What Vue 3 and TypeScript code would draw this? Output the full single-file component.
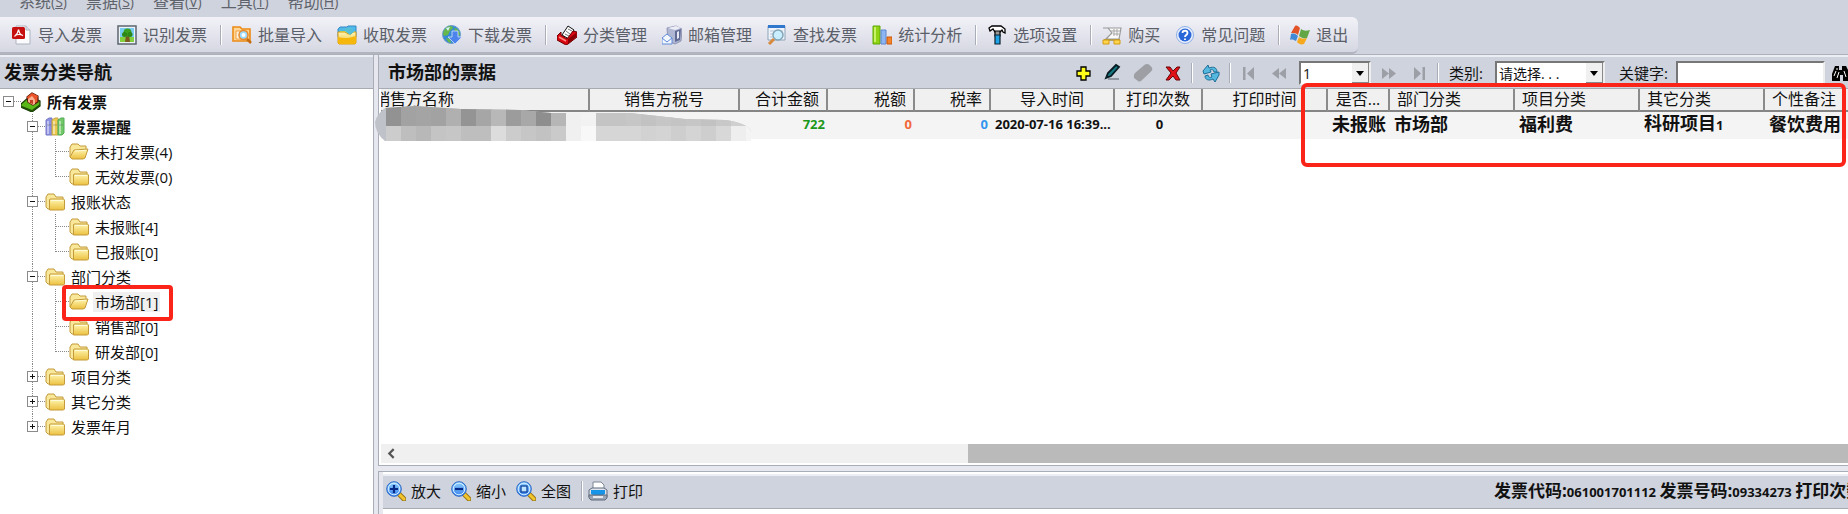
<script setup lang="ts">
import { ref } from 'vue'

interface MenuEntry { label: string; key: string }
interface Tool { icon: string; label: string; sep?: boolean }
interface TreeRow {
  label: string
  level: 0 | 1 | 2
  icon: string
  toggle?: 'open' | 'closed'
  bold?: boolean
  selected?: boolean
  marked?: boolean
  last?: boolean
}
interface Column { key: string; label: string; align: 'left' | 'center' | 'right' }

const menus: MenuEntry[] = [
  { label: '系统', key: 'S' },
  { label: '票据', key: 'S' },
  { label: '查看', key: 'V' },
  { label: '工具', key: 'T' },
  { label: '帮助', key: 'H' },
]

const tools: Tool[] = [
  { icon: 'pdf', label: '导入发票' },
  { icon: 'photo', label: '识别发票', sep: true },
  { icon: 'batch', label: '批量导入' },
  { icon: 'receive', label: '收取发票' },
  { icon: 'download', label: '下载发票', sep: true },
  { icon: 'classify', label: '分类管理' },
  { icon: 'mail', label: '邮箱管理' },
  { icon: 'search', label: '查找发票' },
  { icon: 'chart', label: '统计分析', sep: true },
  { icon: 'hammer', label: '选项设置', sep: true },
  { icon: 'cart', label: '购买' },
  { icon: 'help', label: '常见问题', sep: true },
  { icon: 'exit', label: '退出' },
]

const tree: TreeRow[] = [
  { label: '所有发票', level: 0, icon: 'house', toggle: 'open', bold: true },
  { label: '发票提醒', level: 1, icon: 'books', toggle: 'open', bold: true },
  { label: '未打发票(4)', level: 2, icon: 'folder-open' },
  { label: '无效发票(0)', level: 2, icon: 'folder', last: true },
  { label: '报账状态', level: 1, icon: 'folder', toggle: 'open' },
  { label: '未报账[4]', level: 2, icon: 'folder' },
  { label: '已报账[0]', level: 2, icon: 'folder', last: true },
  { label: '部门分类', level: 1, icon: 'folder', toggle: 'open' },
  { label: '市场部[1]', level: 2, icon: 'folder-open', selected: true, marked: true },
  { label: '销售部[0]', level: 2, icon: 'folder' },
  { label: '研发部[0]', level: 2, icon: 'folder', last: true },
  { label: '项目分类', level: 1, icon: 'folder', toggle: 'closed' },
  { label: '其它分类', level: 1, icon: 'folder', toggle: 'closed' },
  { label: '发票年月', level: 1, icon: 'folder', toggle: 'closed', last: true },
]

const columns: Column[] = [
  { key: 'seller', label: '销售方名称', align: 'left' },
  { key: 'taxno', label: '销售方税号', align: 'center' },
  { key: 'total', label: '合计金额', align: 'right' },
  { key: 'tax', label: '税额', align: 'right' },
  { key: 'rate', label: '税率', align: 'right' },
  { key: 'time', label: '导入时间', align: 'center' },
  { key: 'prints', label: '打印次数', align: 'center' },
  { key: 'printed', label: '打印时间', align: 'center' },
  { key: 'status', label: '是否...', align: 'center' },
  { key: 'dept', label: '部门分类', align: 'left' },
  { key: 'project', label: '项目分类', align: 'left' },
  { key: 'other', label: '其它分类', align: 'left' },
  { key: 'note', label: '个性备注', align: 'left' },
]

const maskTop = ['92', 'a2', 'a4', 'a2', 'b0', '94', 'a6', 'b8', '9c', 'a8', '8e', 'b6', 'f0', 'f2', 'c4', 'c4', 'c6', 'c2', 'c6', 'c4', 'c6', 'c2', 'c8', 'd0', 'f0']
const maskBottom = ['cc', 'be', 'b8', 'c4', 'c6', 'be', 'be', 'dc', 'cc', 'c6', 'c2', 'ca', 'f0', 'f8', 'd6', 'd6', 'd6', 'd2', 'd4', 'ce', 'd4', 'ce', 'd8', 'ee', 'f4']
const grey = (v: string): string => `#${v}${v}${v}`

const page = ref('1')
const keyword = ref('')
</script>

<template>
  <div class="app">
    <svg class="defs" aria-hidden="true">
      <linearGradient id="gold" x1="0" y1="0" x2="0" y2="1">
        <stop offset="0" stop-color="#fff6b0" /><stop offset="1" stop-color="#ecc040" />
      </linearGradient>
      <linearGradient id="azure" x1="0" y1="0" x2="0" y2="1">
        <stop offset="0" stop-color="#8fd0ff" /><stop offset="1" stop-color="#3b83ee" />
      </linearGradient>
      <symbol id="pdf" viewBox="0 0 20 20">
        <path d="M4 1h10l4 4v14H4z" fill="#fbfbfd" stroke="#aeb3bf" /><path d="M14 1v4h4" fill="#dfe3ea" stroke="#aeb3bf" />
        <rect x="0" y="2" width="13" height="12" rx="1.500" fill="#c80f10" />
        <path d="M6.500 4.500c1 4 1.500 5 4.500 6M6.500 4.500c-.5 4-1.500 5-4 7M3 10.500c3-1.500 5-1.500 8 0" fill="none" stroke="#fff" stroke-width="1.200" />
      </symbol>
      <symbol id="photo" viewBox="0 0 20 20">
        <path d="M1 1h18v18H1z" fill="#eef3f8" stroke="#5c6670" stroke-width="1.500" /><path d="M3 3h14v9H3z" fill="#79cdf5" /><path d="M3 12h14v5H3z" fill="#84cf3d" />
        <path d="M9 10h3l1 7H8z" fill="#7a5a20" /><circle cx="10.500" cy="7.500" r="4" fill="#3b9f20" /><circle cx="7.500" cy="9.500" r="2.500" fill="#2d8817" /><circle cx="13" cy="9.500" r="2.500" fill="#2d8817" />
      </symbol>
      <symbol id="batch" viewBox="0 0 20 20">
        <path d="M1 2h7l2 2h8v12H1z" fill="#ffd695" stroke="#ec8b14" stroke-width="1.600" /><path d="M4 6h11v8H4z" fill="#fff1d8" stroke="#f2a040" />
        <circle cx="11.500" cy="10" r="4.500" fill="#9adaff" stroke="#e6892c" stroke-width="1.500" /><circle cx="11.500" cy="10" r="2" fill="#fff" /><path d="M15 14l4 4" stroke="#c56b10" stroke-width="2.500" />
      </symbol>
      <symbol id="receive" viewBox="0 0 20 20">
        <path d="M1 4l2-2h7l1-1h8v11H1z" fill="#4fb9ea" stroke="#3489c1" /><path d="M3 6h15v5H3z" fill="#b9eb77" />
        <path d="M1 7h7l3 2h3l2-2h3v11l-1 1H2l-1-1z" fill="url(#gold)" stroke="#d99b11" /><path d="M1 12c6 2 12 1 18-1v7l-1 1H2l-1-1z" fill="#f5b70c" /><path d="M8 3h7v3l3 0-5 4-5-4z" fill="#56bfd6" />
      </symbol>
      <symbol id="download" viewBox="0 0 20 20">
        <circle cx="9.500" cy="9.500" r="9" fill="#3489d8" stroke="#6b9bc8" /><path d="M4 3c3-3 7-2 7 0L8 6 6 10 2 11C0 8 2 5 4 3zM12 3c4 0 6 4 6 8l-4-3zM4 13l4 1 1 4c-2 0-4-2-5-5z" fill="#66b84a" /><path d="M4 3l4-1-2 4z" fill="#d9f0ff" />
        <path d="M10 6h6v6h4l-7 7-7-7h4z" fill="#4c83ed" stroke="#d5e3fb" stroke-width=".8" />
      </symbol>
      <symbol id="classify" viewBox="0 0 20 20">
        <path d="M5 10L11 1l6 4-5 9z" fill="#fff" stroke="#111" /><path d="M9 6l4 3M11 4l4 2M8 9l4 2" stroke="#777" />
        <path d="M0 11l4-4v3l6 4 6-8 4 1v5l-9 7-2 1-9-5z" fill="#db0710" stroke="#6c0002" /><path d="M11 14v5l8-7V8z" fill="#8b0003" /><path d="M2 12l7 4" stroke="#ff8a80" stroke-width="1.500" />
      </symbol>
      <symbol id="mail" viewBox="0 0 20 20">
        <path d="M5 3l9-2 6 3-1 12-6 3-7-3z" fill="#b0b7d2" stroke="#8f95b4" /><path d="M13 6l6-2-1 11-5 2z" fill="#626b96" /><path d="M15 7l2-1v7l-2 1z" fill="#e6e9f4" /><path d="M6 3l8-2 5 2-6 2z" fill="#ecedf6" />
        <path d="M0 13l5-4 5 4v6H0z" fill="#f3f8ff" stroke="#618bd8" /><path d="M0 13l5 4 5-4" fill="none" stroke="#618bd8" />
      </symbol>
      <symbol id="search" viewBox="0 0 20 20">
        <path d="M1 1h17v14H1z" fill="#eef4fa" stroke="#8fa3b8" /><path d="M1 0h17v3H1z" fill="#2f78cd" /><path d="M3 6h13M3 9h13M3 12h13" stroke="#b9c6d4" />
        <circle cx="11" cy="10" r="5" fill="#c7efff" fill-opacity=".9" stroke="#83a5b8" stroke-width="1.500" /><path d="M7 14l-5 5" stroke="#d88a3c" stroke-width="3" />
      </symbol>
      <symbol id="chart" viewBox="0 0 20 20">
        <path d="M1 1h7v18H1z" fill="#8ed314" stroke="#5fa707" /><path d="M9 5h5v14H9z" fill="#8db5f2" stroke="#5c86cf" /><path d="M15 12h5v7h-5z" fill="#f48329" stroke="#c9570b" /><path d="M3 2v15" stroke="#c8f368" stroke-width="2" />
      </symbol>
      <symbol id="hammer" viewBox="0 0 20 20">
        <path d="M2 3l3-2h9l4 3v4l-2-1-1-2-2 2H8L6 4 3 6z" fill="#fff" stroke="#000" stroke-width="1.300" /><path d="M8 6h5v5H8z" fill="#999" stroke="#000" stroke-width="1.200" /><path d="M8 10h5v9H8z" fill="#20a5e8" stroke="#0b2430" stroke-width="1.200" />
      </symbol>
      <symbol id="cart" viewBox="0 0 20 20">
        <path d="M1 3h5l4 5-6 6h13l2-11H6" fill="#fafafa" stroke="#9a9a9a" stroke-width="1.200" /><path d="M9 6h9M11 9h6M12 4v7M15 4v7" stroke="#a8a8a8" /><path d="M2 15h16" stroke="#a98f30" stroke-width="1.500" />
        <path d="M1 15h6v4H1zM12 15h6v4h-6z" fill="#ffd54c" stroke="#d39b12" />
      </symbol>
      <symbol id="help" viewBox="0 0 20 20">
        <circle cx="10" cy="10" r="8.500" fill="#eaf1fd" stroke="#8eaee5" /><circle cx="10" cy="10" r="6.500" fill="#2a67d8" /><path d="M7.500 8c0-3 5-3 5 0 0 2-2.500 2-2.500 4M10 13.500v1.500" fill="none" stroke="#fff" stroke-width="1.800" />
      </symbol>
      <symbol id="exit" viewBox="0 0 20 20">
        <path d="M5 1c2-1 3 0 5 2L8 10C6 8 4 8 1 8z" fill="#e25327" /><path d="M11 4c3 2 5 2 9 1l-3 8c-3 1-5 0-8-2z" fill="#62a646" /><path d="M1 9c3-1 5 0 7 2l-2 5c-2-1-4-2-6-1z" fill="#4289d5" /><path d="M9 12c2 2 5 2 8 1l-3 6c-3 1-5 0-7-2z" fill="#f6a91d" />
      </symbol>
      <symbol id="house" viewBox="0 0 20 20">
        <path d="M0 12l8-7 11 4v5l-8 6-11-5z" fill="#57b817" stroke="#173c05" stroke-width="1.200" /><path d="M1 14l10 4 8-6v2l-8 6-10-4z" fill="#204d08" />
        <path d="M6 5l5-4 6 3v6l-5 3-5-3z" fill="#e95d32" stroke="#551505" stroke-width="1.200" /><path d="M7 6l4-3 3 5v4l-2 1-5-3z" fill="#f8b090" /><path d="M9 8h3v4l-3-1z" fill="#c14021" />
        <path d="M6 5l5-4 6 3-2 4-4-4-4 3z" fill="#ed5329" />
      </symbol>
      <symbol id="books" viewBox="0 0 20 20">
        <path d="M1 3l3-2h3v17H1z" fill="#8d91e2" stroke="#7779c5" /><path d="M7 3l3-2h3v17H7z" fill="#ecc84e" stroke="#c5a448" /><path d="M13 3l3-2h3v15l-2 2h-4z" fill="#73c968" stroke="#50aa55" /><path d="M3 4v13M9 4v13M15 4v13" stroke="#fff" stroke-opacity=".6" stroke-width="1.500" /><path d="M2 8h4M8 8h4M14 8h4" stroke="#555" stroke-opacity=".4" />
      </symbol>
      <symbol id="folder" viewBox="0 0 20 20">
        <path d="M1 15V5l2-3h6l2 3h7v11l-1 1H3z" fill="#f9e79a" stroke="#c49a3a" /><path d="M5 7h13.500l1 1v9l-1 1H4.500V8z" fill="url(#gold)" stroke="#c49a3a" /><path d="M6 8.500h12" stroke="#fffbd8" />
      </symbol>
      <symbol id="folder-open" viewBox="0 0 20 20">
        <path d="M1 15V5l2-3h6l2 2h6v5" fill="#f9e79a" stroke="#c49a3a" /><path d="M5 8l14-1-3 9-2 1H3l-2-2z" fill="url(#gold)" stroke="#c49a3a" /><path d="M6 9l11-.7" stroke="#fffbd8" />
      </symbol>
      <symbol id="add" viewBox="0 0 20 20"><path d="M8 4h5v4h4v5h-4v4H8v-4H4V8h4z" fill="#ffff1a" stroke="#000" stroke-width="1.300" /></symbol>
      <symbol id="edit" viewBox="0 0 20 20"><path d="M3 15l2-5 8-8 3 2-8 9z" fill="#167984" stroke="#071b22" stroke-width="1.800" /><path d="M5 16h11" stroke="#7d838d" stroke-width="1.500" /></symbol>
      <symbol id="eraser" viewBox="0 0 20 20"><path d="M2 10L12 1.500q2-1 4 0l3 3q1 2-1 4L8 18q-2 1-3 0l-4-3q-1-3 1-5z" fill="#9d9fa4" /></symbol>
      <symbol id="remove" viewBox="0 0 20 20"><path d="M3 4h4l3 4 4-4h3l-4 6 4 7h-4l-3-4-4 4H3l5-7z" fill="#e01217" stroke="#6a0507" /></symbol>
      <symbol id="refresh" viewBox="0 0 20 20"><path d="M2 8l5-6 1 3c5-2 8 0 8 4l-3 0c0-2-2-3-4-2l1 2-7 2zM18 12l-4 7-2-3c-4 2-8 1-8-3l3-1c0 2 2 3 4 2l-1-3 8-2z" fill="#55b9df" stroke="#1d6d98" /></symbol>
      <symbol id="first" viewBox="0 0 20 20"><path d="M4 4h2.500v13H4zM15 4v13L8 10.500z" fill="#9c9fa6" /></symbol>
      <symbol id="prev" viewBox="0 0 20 20"><path d="M10 5v11l-7-5.500zM17 5v11l-7-5.500z" fill="#9c9fa6" /></symbol>
      <symbol id="next" viewBox="0 0 20 20"><path d="M3 5v11l7-5.500zM10 5v11l7-5.500z" fill="#9c9fa6" /></symbol>
      <symbol id="last" viewBox="0 0 20 20"><path d="M5 4v13l7-6.500zM13.500 4H16v13h-2.500z" fill="#9c9fa6" /></symbol>
      <symbol id="find" viewBox="0 0 20 20"><path d="M4 3h4v4h3V3h4l4 8v7h-7v-6h-3v6H1v-7z" fill="#000" /><path d="M5 8l-2 5M13 8l2 6M6 5v2M8 9l-2 6" stroke="#fff" stroke-width="1" /></symbol>
      <symbol id="zoom-in" viewBox="0 0 20 20"><path d="M13 13l5 5" stroke="#9c7412" stroke-width="5" stroke-linecap="round" /><path d="M13 13l5 5" stroke="#f1c52c" stroke-width="3" stroke-linecap="round" /><circle cx="8" cy="8" r="7.300" fill="url(#azure)" stroke="#2d68c6" /><circle cx="8" cy="8" r="5.800" fill="none" stroke="#d3efff" /><path d="M8 4v8M4 8h8" stroke="#062a88" stroke-width="2.200" /></symbol>
      <symbol id="zoom-out" viewBox="0 0 20 20"><path d="M13 13l5 5" stroke="#9c7412" stroke-width="5" stroke-linecap="round" /><path d="M13 13l5 5" stroke="#f1c52c" stroke-width="3" stroke-linecap="round" /><circle cx="8" cy="8" r="7.300" fill="url(#azure)" stroke="#2d68c6" /><circle cx="8" cy="8" r="5.800" fill="none" stroke="#d3efff" /><path d="M4 8h8" stroke="#062a88" stroke-width="2.200" /></symbol>
      <symbol id="zoom-fit" viewBox="0 0 20 20"><path d="M13 13l5 5" stroke="#9c7412" stroke-width="5" stroke-linecap="round" /><path d="M13 13l5 5" stroke="#f1c52c" stroke-width="3" stroke-linecap="round" /><circle cx="8" cy="8" r="7.300" fill="url(#azure)" stroke="#2d68c6" /><circle cx="8" cy="8" r="5.800" fill="none" stroke="#d3efff" /><rect x="5" y="5" width="6" height="6" fill="#bfe4ff" stroke="#0f429f" stroke-width="1.300" /></symbol>
      <symbol id="print" viewBox="0 0 20 20"><path d="M5 9V1h8l3 3v5z" fill="#fff" stroke="#7d8794" /><path d="M1 9l3-2h12l3 2v7H1z" fill="#dfe4ec" stroke="#5e6b7d" /><path d="M3 9h14v4l-2 1H5l-2-1z" fill="#1695e8" /><path d="M1 14h18v3l-2 2H3l-2-2z" fill="#9ba5b5" stroke="#5e6b7d" /><path d="M5 16h10" stroke="#fff" stroke-width="1.500" /></symbol>
    </svg>

    <nav class="menubar">
      <button v-for="m in menus" :key="m.label" type="button">{{ m.label }}<span class="hot">(<u>{{ m.key }}</u>)</span></button>
    </nav>

    <div class="toolbar" role="toolbar" aria-label="工具">
      <template v-for="t in tools" :key="t.label">
        <button type="button" class="tool"><svg class="icon"><use :href="'#' + t.icon" /></svg>{{ t.label }}</button>
        <i v-if="t.sep" class="sep"></i>
      </template>
    </div>

    <main class="main">
      <aside class="nav">
        <h2 class="bar title">发票分类导航</h2>
        <ul class="tree">
          <li v-for="row in tree" :key="row.label" class="row" :class="['lv' + row.level, { bold: row.bold, last: row.last }]">
            <i v-if="row.level === 2" class="trunk"></i>
            <button v-if="row.toggle" type="button" class="toggle" :class="row.toggle" :aria-label="row.label + ' 展开'"></button>
            <i class="twig"></i>
            <svg class="icon"><use :href="'#' + row.icon" /></svg>
            <span class="label" :class="{ selected: row.selected }">{{ row.label }}</span>
            <i v-if="row.marked" class="mark"></i>
          </li>
        </ul>
      </aside>

      <section class="content">
        <div class="list">
          <div class="bar listbar">
            <h2 class="title">市场部的票据</h2>
            <div class="actions">
              <button type="button" aria-label="新增"><svg class="icon"><use href="#add" /></svg></button>
              <button type="button" aria-label="编辑"><svg class="icon"><use href="#edit" /></svg></button>
              <button type="button" aria-label="清除"><svg class="icon"><use href="#eraser" /></svg></button>
              <button type="button" aria-label="删除"><svg class="icon"><use href="#remove" /></svg></button>
              <i class="sep"></i>
              <button type="button" aria-label="刷新"><svg class="icon"><use href="#refresh" /></svg></button>
              <i class="sep"></i>
              <button type="button" aria-label="首页"><svg class="icon"><use href="#first" /></svg></button>
              <button type="button" aria-label="上一页"><svg class="icon"><use href="#prev" /></svg></button>
              <span class="combo page">
                <select v-model="page" aria-label="页码"><option>1</option></select>
                <i class="arrow"></i>
              </span>
              <button type="button" aria-label="下一页"><svg class="icon"><use href="#next" /></svg></button>
              <button type="button" aria-label="末页"><svg class="icon"><use href="#last" /></svg></button>
              <i class="sep"></i>
              <label class="kindlabel" for="kind">类别:</label>
              <span class="combo kind">
                <select id="kind"><option>请选择. . .</option></select>
                <i class="arrow"></i>
              </span>
              <label class="keylabel" for="keyword">关键字:</label>
              <input id="keyword" v-model="keyword" type="text" />
              <button type="button" class="find" aria-label="查找"><svg class="icon"><use href="#find" /></svg></button>
            </div>
          </div>

          <div class="grid">
            <table>
              <colgroup><col v-for="c in columns" :key="c.key" :class="'c-' + c.key" /></colgroup>
              <thead>
                <tr><th v-for="c in columns" :key="c.key" :class="c.align">{{ c.label }}</th></tr>
              </thead>
              <tbody>
                <tr>
                  <td></td>
                  <td></td>
                  <td class="right green">722</td>
                  <td class="right orange">0</td>
                  <td class="right blue">0</td>
                  <td class="time">2020-07-16 16:39...</td>
                  <td class="center">0</td>
                  <td></td>
                  <td class="cjk">未报账</td>
                  <td class="cjk">市场部</td>
                  <td class="cjk">福利费</td>
                  <td class="cjk">科研项目<small>1</small></td>
                  <td class="cjk">餐饮费用</td>
                </tr>
              </tbody>
            </table>
          </div>

          <div class="hscroll">
            <button type="button" aria-label="向左滚动"><svg viewBox="0 0 10 10"><path d="M7 1L3 5l4 4" fill="none" stroke="#555" stroke-width="2" /></svg></button>
            <i class="thumb"></i>
          </div>

          <svg class="mask" viewBox="0 0 376 36" aria-hidden="true">
            <clipPath id="brush"><path d="M10 36Q0 28 0 17Q2 9 10 3L40 1L86 4L145 5L176 8H255L310 14L350 15Q372 18 376 26V36Z" /></clipPath>
            <g clip-path="url(#brush)">
              <rect width="376" height="36" fill="#bfc2c8" />
              <rect v-for="(v, i) in maskTop" :key="'t' + i" :x="11 + i * 15" y="0" width="16" height="21" :fill="grey(v)" />
              <rect v-for="(v, i) in maskBottom" :key="'b' + i" :x="11 + i * 15" y="21" width="16" height="15" :fill="grey(v)" />
            </g>
          </svg>
          <i class="highlight"></i>
        </div>

        <div class="viewer">
          <div class="bar viewbar">
            <button type="button" class="vtool"><svg class="icon"><use href="#zoom-in" /></svg>放大</button>
            <button type="button" class="vtool"><svg class="icon"><use href="#zoom-out" /></svg>缩小</button>
            <button type="button" class="vtool"><svg class="icon"><use href="#zoom-fit" /></svg>全图</button>
            <i class="sep"></i>
            <button type="button" class="vtool"><svg class="icon"><use href="#print" /></svg>打印</button>
            <p class="status">发票代码:<small>061001701112 </small>发票号码:<small>09334273 </small>打印次数:<small>0</small></p>
          </div>
        </div>
      </section>
    </main>
  </div>
</template>

<style>
body { margin: 0; overflow: hidden; }
</style>

<style scoped>
.app {
  display: flex;
  flex-direction: column;
  height: 100vh;
  overflow: hidden;
  background: #cfd3dd;
  color: #111;
  font: 15px/20px "Open Sans", "Noto Sans CJK SC", sans-serif;
}
.defs { position: absolute; width: 0; height: 0; }
button { display: flex; align-items: center; padding: 0; border: 0; background: none; color: inherit; font: inherit; white-space: nowrap; }
h2, p, ul { margin: 0; padding: 0; }
i { display: block; flex: none; }
.icon { display: block; flex: none; width: 20px; height: 20px; }

.menubar { display: flex; align-items: flex-end; flex: none; gap: 19px; height: 12px; padding: 0 0 5px 19px; color: #5f636c; font-size: 16px; }
.hot { font-size: 14px; }

.toolbar {
  display: flex;
  align-items: center;
  align-self: flex-start;
  flex: none;
  box-sizing: border-box;
  height: 37px;
  padding: 0 0 0 12px;
  border-bottom: 2px solid #b2b4be;
  border-radius: 0 6px 6px 0;
  background: linear-gradient(#f2f2f8, #d5d7e2);
  color: #5b5f69;
  font-size: 16px;
}
.tool { gap: 6px; margin-right: 15px; }
.tool:last-child { margin-right: 10px; }
.sep { width: 1px; height: 20px; border-right: 1px solid #fff; background: #a9adb8; }
.toolbar .sep { margin: 0 10px 0 -2px; }

.main { display: flex; flex: 1; min-height: 0; border-top: 1px solid #adb0bb; background: #e6e7ef; }
.nav { display: flex; flex-direction: column; flex: none; box-sizing: border-box; width: 374px; border-right: 1px solid #a9adb8; background: #fff; }
.bar { box-sizing: border-box; flex: none; border-top: 2px solid #eceef5; border-bottom: 1px solid #a9abb2; background: #cfd3dd; }
.title { font-size: 18px; font-weight: 700; color: #111; }
.nav .title { height: 34px; padding: 0 4px; line-height: 30px; }

.tree { list-style: none; }
.row { position: relative; display: flex; align-items: center; height: 25px; }
.bold { font-weight: 700; }
.lv0 { padding-left: 3px; }
.lv1 { padding-left: 27px; }
.lv2 { padding-left: 55px; }
.toggle { position: relative; z-index: 1; flex: none; justify-content: center; width: 11px; height: 11px; border: 1px solid #8b8b8b; background: #fff; }
.toggle::before { content: ""; position: absolute; left: 2px; right: 2px; top: 4px; height: 1px; background: #111; }
.closed::after { content: ""; position: absolute; top: 2px; bottom: 2px; left: 4px; width: 1px; background: #111; }
.twig { width: 7px; border-top: 1px dotted #888; }
.lv2 .twig { width: 14px; }
.row .icon { margin-right: 4px; }
.label { padding: 0 2px; }
.selected { background: #f0f0f0; }
.lv1::before, .lv2::before { content: ""; position: absolute; left: 32px; top: 0; height: 100%; border-left: 1px dotted #888; }
.lv1.last::before { height: 50%; }
.trunk { position: absolute; left: 55px; top: 0; height: 100%; border-left: 1px dotted #888; }
.last .trunk { height: 50%; }
.mark { position: absolute; z-index: 2; left: 62px; top: -4px; box-sizing: border-box; width: 111px; height: 36px; border: 4px solid #fb2418; border-radius: 4px; }

.content { display: flex; flex-direction: column; flex: 1; min-width: 0; padding-left: 4px; }
.list { position: relative; display: flex; flex-direction: column; flex: 1; min-height: 0; border: 1px solid #a9adb8; border-width: 0 0 1px 1px; background: #fff; }
.listbar { display: flex; align-items: center; height: 34px; padding-left: 9px; overflow: hidden; }
.listbar .title { padding-bottom: 2px; }
.actions { display: flex; align-items: center; flex: none; margin-left: auto; }
.actions button { margin-right: 10px; }
.actions .sep { margin: 0 8px 0 -2px; }
.actions label { white-space: nowrap; }
.kindlabel { margin: 0 12px 0 2px; }
.keylabel { margin: 0 8px 0 14px; }
.combo { position: relative; display: block; box-sizing: border-box; height: 24px; border: 2px solid #777; border-right-color: #eee; border-bottom-color: #eee; background: #fff; }
.combo select { width: 100%; height: 20px; padding: 0 2px; border: 0; appearance: none; background: #fff; color: #111; font: 14px/20px "Open Sans", "Noto Sans CJK SC", sans-serif; }
.actions .page { width: 72px; margin-right: 8px; }
.kind { width: 110px; }
.arrow { position: absolute; right: 0; top: 0; width: 17px; height: 20px; border-left: 1px solid #fff; background: #f0f0f0; box-shadow: inset -1px -1px #888; pointer-events: none; }
.arrow::after { content: ""; position: absolute; left: 4px; top: 8px; border: 4px solid transparent; border-top: 5px solid #000; border-bottom: 0; }
.actions input { box-sizing: border-box; width: 149px; height: 24px; padding: 0 3px; border: 2px solid #777; border-right-color: #eee; border-bottom-color: #eee; border-radius: 0; font: inherit; }
.actions .find { margin: 0 -3px 0 6px; }

.grid { flex: 1; min-height: 0; overflow: hidden; margin-left: 2px; }
table { width: 1503px; margin-left: -7px; border-collapse: separate; border-spacing: 0; table-layout: fixed; }
.c-seller { width: 216px; }
.c-taxno { width: 150px; }
.c-total { width: 88px; }
.c-tax { width: 87px; }
.c-rate { width: 76px; }
.c-time { width: 124px; }
.c-prints { width: 88px; }
.c-printed { width: 125px; }
.c-status { width: 62px; }
.c-dept, .c-project, .c-other { width: 125px; }
.c-note { width: 112px; }
th, td { box-sizing: border-box; overflow: hidden; white-space: nowrap; text-align: left; }
th { height: 23px; padding: 0 7px; border-right: 2px solid #8b8b8b; border-bottom: 2px solid #858585; background: #f0f0f0; font-size: 16px; font-weight: 400; line-height: 21px; }
th:first-child { padding-left: 0; }
td { height: 25px; padding: 0 3px 2px 4px; background: #f4f4f4; font-size: 13px; font-weight: 700; line-height: 23px; }
.center { text-align: center; }
.right { text-align: right; }
td.time { padding-right: 0; }
.cjk { font-size: 18px; }
small { font-size: 13px; }
.green { color: #1b981b; }
.orange { color: #f2683a; }
.blue { color: #3296ee; }

.hscroll { display: flex; align-items: stretch; flex: none; height: 19px; margin: 0 0 2px 2px; background: #f0f0f0; }
.hscroll button { justify-content: center; width: 20px; }
.hscroll svg { width: 11px; height: 11px; }
.thumb { width: 60%; margin-left: auto; background: #bababa; }
.mask { position: absolute; left: -4px; top: 50px; width: 376px; height: 36px; }
.highlight { position: absolute; right: 2px; top: 28px; box-sizing: border-box; width: 545px; height: 84px; border: 4px solid #fb2418; border-radius: 6px; }

.viewer { flex: none; box-sizing: border-box; height: 43px; margin-top: 5px; padding: 2px 0 0 4px; border: 1px solid #a9adb8; border-width: 1px 0 0 1px; background: linear-gradient(90deg, #e6e7ef 4px, #fff 4px); }
.viewbar { display: flex; align-items: center; height: 35px; padding: 0 0 2px 3px; overflow: hidden; }
.vtool { gap: 5px; margin-right: 10px; }
.viewbar .sep { margin-right: 5px; }
.status { flex: none; width: 354px; margin-left: auto; overflow: hidden; white-space: nowrap; font-size: 17px; font-weight: 700; }
</style>
